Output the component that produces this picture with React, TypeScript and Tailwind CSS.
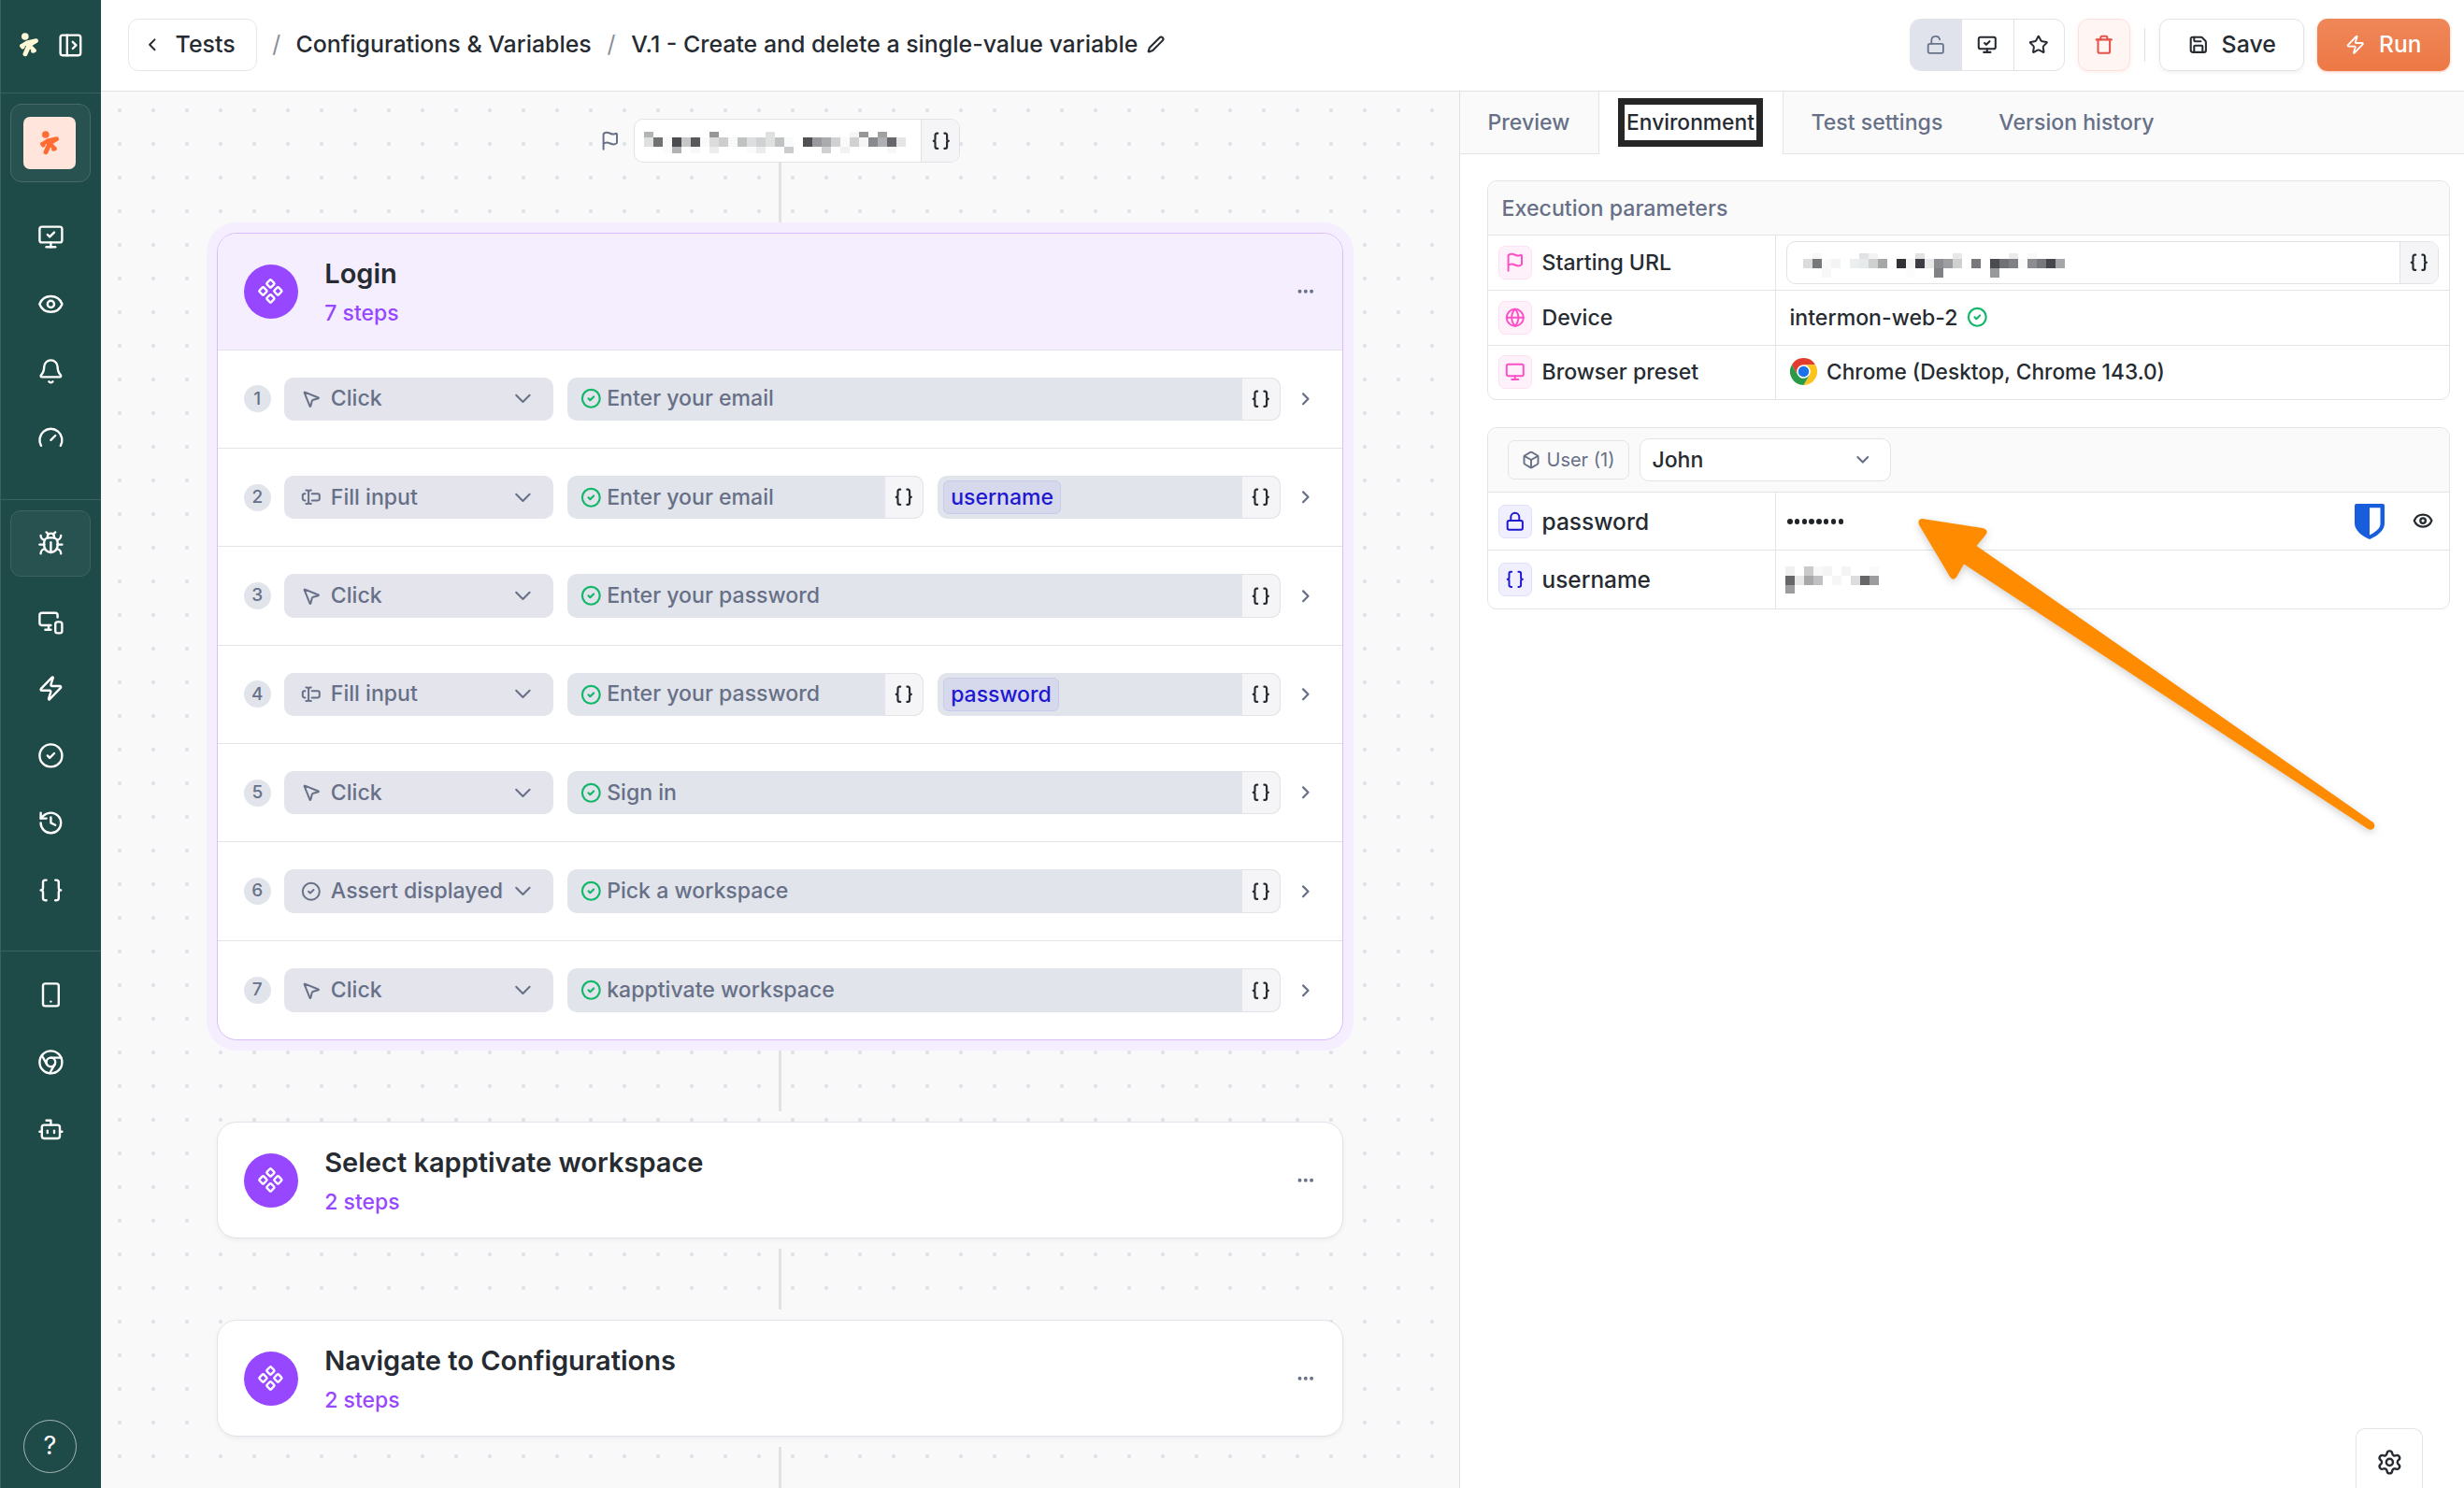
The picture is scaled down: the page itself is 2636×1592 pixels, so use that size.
import type { ReactNode } from "react";
import {
  Bell,
  Bot,
  Box,
  Braces,
  Bug,
  ChevronDown,
  ChevronLeft,
  ChevronRight,
  Chromium,
  CircleCheck,
  Component,
  Ellipsis,
  Eye,
  Flag,
  Gauge,
  Globe,
  History,
  Lock,
  LockOpen,
  Monitor,
  MonitorCheck,
  MonitorSmartphone,
  MousePointer2,
  PanelLeftOpen,
  Pen,
  Save,
  Settings,
  Smartphone,
  Star,
  TextCursorInput,
  Trash,
  Zap,
} from "lucide-react";
import type { LucideIcon } from "lucide-react";

const SM = 21.6;
const LG = 28.8;

/* ---------- Shared pieces ---------- */

function Runner({ className }: { className: string }) {
  return (
    <svg viewBox="0 0 60 78" className={className} fill="none" stroke="currentColor" strokeLinecap="round" strokeLinejoin="round">
      <circle cx="17.5" cy="12" r="11.5" fill="currentColor" stroke="none" />
      <path d="M8 42L24 32L53 25" strokeWidth="13" />
      <path d="M53 27L38 36" strokeWidth="12" />
      <path d="M7 42L10 46" strokeWidth="13" />
      <path d="M30 36L27 48L18 68" strokeWidth="15" />
      <path d="M32 42L47 57" strokeWidth="13" />
      <path d="M47 58L42 59" strokeWidth="12" />
    </svg>
  );
}

function ChromeLogo() {
  return (
    <svg viewBox="0 0 48 48" className="size-[29px] shrink-0">
      <circle cx="24" cy="24" r="12" fill="#fff" />
      <path d="M24,12H44.7812a23.9939,23.9939,0,0,0-41.5639.0029L13.6079,30l.0093-.0024A11.9852,11.9852,0,0,1,24,12Z" fill="#e33b2e" />
      <path d="M34.3913,30.0029,24.0007,48A23.994,23.994,0,0,0,44.78,12.0031H23.9989l-.0025.0093A11.985,11.985,0,0,1,34.3913,30.0029Z" fill="#fcc31e" />
      <path d="M13.6086,30.0031,3.218,12.006A23.994,23.994,0,0,0,24.0025,48L34.3931,30.0029l-.0067-.0068a11.9852,11.9852,0,0,1-20.7778.007Z" fill="#2a9a47" />
      <circle cx="24" cy="24" r="9.5" fill="#1a73e8" />
    </svg>
  );
}

/* Redacted value: a coarse mosaic, one list of grey levels per row ("" leaves a cell empty). */
function Mosaic({ rows }: { rows: { height: number; cells: string[] }[] }) {
  return (
    <div className="flex flex-col">
      {rows.map((row, r) => (
        <div key={r} className="flex" style={{ height: row.height }}>
          {row.cells.map((c, i) => (
            <div key={i} className="w-[10px] shrink-0" style={{ backgroundColor: c ? "#" + c : undefined }} />
          ))}
        </div>
      ))}
    </div>
  );
}

function sparse(length: number, cells: Record<number, string>): string[] {
  return Array.from({ length }, (_, i) => cells[i] ?? "");
}

const startMosaic = [
  { height: 6, cells: sparse(28, { 0: "b3b5b5", 7: "969898", 13: "dfe1e1", 22: "f6f6f6", 23: "969898", 25: "a0a2a2" }) },
  {
    height: 10,
    cells: sparse(28, {
      0: "dfe1e1", 1: "717174", 2: "fafafa", 3: "4c4b50", 4: "c6c8c8", 5: "58585c", 6: "fafafa", 7: "dcdcdd", 8: "cdcdce",
      9: "f8f8f8", 10: "bfc2c2", 11: "dcdedf", 12: "d0d1d2", 13: "dfe1e1", 14: "bfc2c2", 15: "fafafa", 17: "4f4f54",
      18: "98999c", 19: "a9abad", 20: "d0d1d2", 21: "fafafa", 22: "d0d1d2", 23: "f6f6f6", 24: "87898c", 25: "aeb0b2",
      26: "66666b", 27: "e5e5e5",
    }),
  },
  {
    height: 7,
    cells: sparse(28, { 2: "fbfbfb", 3: "b0b2b4", 5: "f8f8f8", 7: "ececec", 11: "fafafa", 12: "ececec", 15: "cbcccd", 19: "d0d1d2", 21: "f2f2f3", 26: "f8f8f8" }),
  },
];

const urlMosaic = [
  { height: 6, cells: sparse(28, { 1: "f7f7f7", 6: "e0e3e3", 7: "f3f3f3", 12: "e2e2e2", 16: "e8e8e8", 22: "ebebeb", 24: "f8f8f8" }) },
  {
    height: 10,
    cells: sparse(28, {
      0: "dcdcdd", 1: "77787b", 2: "fafafa", 3: "f3f5f5", 5: "ebefee", 6: "e6eaea", 7: "cfd0d0", 8: "a4a6a8", 10: "303035",
      11: "f5f5f5", 12: "3c3c42", 13: "e8e8e9", 14: "8c8d90", 15: "9d9ea1", 16: "cfd0d0", 18: "77787b", 20: "4a4b51",
      21: "707174", 22: "808184", 23: "fafafa", 24: "8c8d90", 25: "77787b", 26: "45464b", 27: "a4a6a8",
    }),
  },
  { height: 10, cells: sparse(28, { 2: "f8f8f8", 11: "fcfcfc", 14: "808184", 20: "97999b" }) },
];

const userMosaic = [
  { height: 10, cells: sparse(10, { 0: "f0f0f0", 2: "cacaca", 3: "f8f8f8", 4: "f4f4f4", 6: "f4f4f4", 9: "fafafa" }) },
  { height: 10, cells: sparse(10, { 0: "666668", 1: "e8e8e8", 2: "a8a8aa", 3: "c0c0c2", 5: "f6f6f6", 7: "dcdcdd", 8: "666668", 9: "9c9c9e" }) },
  { height: 9, cells: sparse(10, { 0: "9c9c9e" }) },
];

/* ---------- Sidebar ---------- */

function NavItem({ icon: Icon }: { icon: LucideIcon }) {
  return (
    <div className="flex h-[71.8px] items-center justify-center">
      <Icon size={LG} strokeWidth={2} />
    </div>
  );
}

function Sidebar() {
  return (
    <aside className="flex h-full w-[108px] shrink-0 flex-col border-l border-[#3b605d] bg-[#1e4a47] text-white">
      <div className="flex h-[100px] shrink-0 items-center gap-[20px] border-b border-[#386260] pb-[3px] pl-[19.5px]">
        <Runner className="h-[26px] w-[20px] text-[#fff8d6]" />
        <PanelLeftOpen size={LG} strokeWidth={2} />
      </div>
      <div className="mr-[11px] ml-[10px] mt-[11px] flex h-[84px] shrink-0 items-center justify-center rounded-[12px] border border-[#47696a] bg-[#27524f]">
        <div className="mr-[2px] flex size-[56px] items-center justify-center rounded-[7px] bg-[#ffe5dc]">
          <Runner className="h-[26px] w-[20px] text-[#ff6c33]" />
        </div>
      </div>
      <div className="mt-[22.5px]">
        {[MonitorCheck, Eye, Bell, Gauge].map((icon, i) => (
          <NavItem key={i} icon={icon} />
        ))}
      </div>
      <div className="mt-[29px] h-px shrink-0 bg-[#386260]" />
      <div className="mr-[11px] ml-[10px] mt-[11.5px] flex h-[71px] shrink-0 items-center justify-center rounded-[11px] border border-[#3d6260] bg-[#27524f]">
        <Bug size={LG} strokeWidth={2} />
      </div>
      <div className="mt-[12px]">
        {[MonitorSmartphone, Zap, CircleCheck, History, Braces].map((icon, i) => (
          <NavItem key={i} icon={icon} />
        ))}
      </div>
      <div className="mt-[28.5px] h-px shrink-0 bg-[#386260]" />
      <div className="mt-[11px]">
        {[Smartphone, Chromium, Bot].map((icon, i) => (
          <NavItem key={i} icon={icon} />
        ))}
      </div>
      <div className="mt-auto mb-[16px] ml-[24px] flex size-[57px] shrink-0 items-center justify-center rounded-full border-[1.5px] border-[#a5b7b5] text-[27px]">
        ?
      </div>
    </aside>
  );
}

/* ---------- Header ---------- */

function Header() {
  return (
    <header className="flex h-[98px] shrink-0 items-center border-b border-[#e3e3e5] bg-white pr-[15px] pb-[2px] pl-[29px] text-[24.9px] font-medium text-[#262b31]">
      <div className="flex h-[56px] w-[138px] items-center rounded-[11px] border border-[#e6e6e9] pl-[14px]">
        <ChevronLeft size={SM} strokeWidth={2.2} />
        <span className="ml-[14px]">Tests</span>
      </div>
      <span className="w-[41.5px] text-center font-normal text-[#8b8f96]">/</span>
      <span>Configurations &amp; Variables</span>
      <span className="w-[42.5px] text-center font-normal text-[#8b8f96]">/</span>
      <span className="whitespace-nowrap">V.1 - Create and delete a single-value variable</span>
      <Pen className="ml-[10px]" size={19} strokeWidth={2.6} />

      <div className="ml-auto flex items-center gap-[14.5px]">
        <div className="flex h-[56px] w-[166px] overflow-hidden rounded-[11px] border border-[#e3e3e6]">
          <div className="flex w-[55px] items-center justify-center bg-[#e0e3ec] text-[#697388]">
            <LockOpen size={SM} />
          </div>
          <div className="flex w-[55px] items-center justify-center">
            <MonitorCheck size={SM} strokeWidth={2.3} />
          </div>
          <div className="flex flex-1 items-center justify-center border-l border-[#e3e3e6]">
            <Star size={SM} strokeWidth={2.2} />
          </div>
        </div>
        <div className="flex size-[56px] items-center justify-center rounded-[11px] border border-[#ffdfdb] bg-[#fff5f3] text-[#e5534b] shadow-[0_2px_4px_rgba(229,83,75,0.08)]">
          <Trash size={SM} strokeWidth={2.3} />
        </div>
        <div className="h-[36px] w-[1.5px] bg-[#dfe0e3]" />
        <div className="flex h-[56px] w-[155px] items-center rounded-[11px] border border-[#e3e3e6] pl-[30px] shadow-[0_2px_4px_rgba(0,0,0,0.06)]">
          <Save size={SM} strokeWidth={2.3} />
          <span className="ml-[14.5px]">Save</span>
        </div>
        <div className="flex h-[56px] w-[142px] items-center rounded-[11px] bg-linear-to-b from-[#ef8758] to-[#ed7845] pl-[30px] text-white shadow-[0_1px_3px_rgba(237,120,69,0.4)]">
          <Zap size={SM} />
          <span className="ml-[14.5px] text-[24.5px]">Run</span>
        </div>
      </div>
    </header>
  );
}

/* ---------- Flow canvas ---------- */

type Step = { action: "Click" | "Fill input" | "Assert displayed"; target: string; variable?: string };

const steps: Step[] = [
  { action: "Click", target: "Enter your email" },
  { action: "Fill input", target: "Enter your email", variable: "username" },
  { action: "Click", target: "Enter your password" },
  { action: "Fill input", target: "Enter your password", variable: "password" },
  { action: "Click", target: "Sign in" },
  { action: "Assert displayed", target: "Pick a workspace" },
  { action: "Click", target: "kapptivate workspace" },
];

const actionIcons: Record<Step["action"], LucideIcon> = {
  Click: MousePointer2,
  "Fill input": TextCursorInput,
  "Assert displayed": CircleCheck,
};

function BracesButton() {
  return (
    <div className="flex w-[41px] shrink-0 items-center justify-center rounded-r-[10px] border-y border-r border-[#e2e3e6] bg-[#f5f5f7] text-[#262b31]">
      <Braces size={SM} strokeWidth={2.4} />
    </div>
  );
}

function StepRow({ step, index }: { step: Step; index: number }) {
  const Icon = actionIcons[step.action];
  return (
    <div className="flex h-[105.35px] items-center border-b border-[#e4e4e7] pr-[29px] pl-[28px] text-[23.1px] font-medium text-[#677087] last:border-b-0">
      <div className="flex size-[29px] shrink-0 items-center justify-center rounded-full bg-[#e1e4eb] text-[19px]">{index}</div>
      <div className="ml-[14.5px] flex h-[46.5px] w-[288px] shrink-0 items-center rounded-[10px] bg-[#e3e4ec] pr-[18px] pl-[18px]">
        <Icon size={SM} strokeWidth={2.2} />
        <span className="ml-[10px] whitespace-nowrap">{step.action}</span>
        <ChevronDown className="ml-auto" size={LG} strokeWidth={1.7} />
      </div>
      <div className="ml-[14.8px] flex h-[46.5px] flex-1 rounded-[10px] bg-[#e1e4eb]">
        <div className="flex flex-1 items-center pl-[14px]">
          <CircleCheck className="text-[#12b76a]" size={SM + 1} strokeWidth={2.3} />
          <span className="ml-[5.5px] whitespace-nowrap">{step.target}</span>
        </div>
        <BracesButton />
      </div>
      {step.variable && (
        <div className="ml-[15.4px] flex h-[46.5px] w-[366.5px] rounded-[10px] bg-[#e1e4eb]">
          <div className="flex flex-1 items-center pl-[5.5px]">
            <span className="flex h-[36px] items-center rounded-[6px] border border-[#c8caea] bg-[#d6d8ec] px-[7.5px] text-[23px] text-[#1f17d2]">
              {step.variable}
            </span>
          </div>
          <BracesButton />
        </div>
      )}
      <ChevronRight className="ml-[16px] shrink-0" size={SM} strokeWidth={2.5} />
    </div>
  );
}

function GroupHeader({ title, count }: { title: string; count: string }) {
  return (
    <div className="flex flex-1 items-center pr-[29px] pl-[28px]">
      <div className="flex size-[58px] shrink-0 items-center justify-center rounded-full bg-[#9747ff] text-white">
        <Component size={LG} />
      </div>
      <div className="flex flex-1 flex-col pt-[3px] pl-[28.5px]">
        <span className="text-[29px] leading-[36px] font-semibold text-[#262b31]">{title}</span>
        <span className="mt-[7px] text-[23px] leading-[34px] font-medium text-[#9747ff]">{count}</span>
      </div>
      <Ellipsis className="text-[#677087]" size={SM} strokeWidth={2.4} />
    </div>
  );
}

function Connector() {
  return <div className="my-[11px] h-[65px] w-[3px] shrink-0 bg-[#e2e2e2]" />;
}

function GroupCard({ title, count }: { title: string; count: string }) {
  return (
    <div className="flex h-[125px] w-[1205.5px] shrink-0 rounded-[21px] border border-[#e1e3ea] bg-white shadow-[0_2px_5px_rgba(0,0,0,0.05)]">
      <GroupHeader title={title} count={count} />
    </div>
  );
}

function Canvas() {
  return (
    <div className="flex w-[1453px] shrink-0 flex-col items-center overflow-hidden bg-[#f9f9f9] bg-[radial-gradient(circle,#e0e2eb_1.7px,transparent_2.4px)] bg-[length:36px_36px] bg-[position:2px_2px] pt-[29px]">
      <div className="flex shrink-0 items-center gap-[15px]">
        <Flag className="text-[#677087]" size={SM} strokeWidth={2.2} />
        <div className="flex h-[47px] w-[349px] overflow-hidden rounded-[10px] border border-[#e2e2e5] bg-white">
          <div className="flex flex-1 items-center pt-[3px] pl-[10px]">
            <Mosaic rows={startMosaic} />
          </div>
          <div className="flex w-[41px] items-center justify-center border-l border-[#e2e2e5] bg-[#f5f5f7] text-[#262b31]">
            <Braces size={SM} strokeWidth={2.4} />
          </div>
        </div>
      </div>
      <div className="mb-[10px] h-[65px] w-[3px] shrink-0 bg-[#e2e2e2]" />
      <div className="w-[1205.5px] shrink-0 overflow-hidden rounded-[21px] border border-[#d9bcfb] bg-white shadow-[0_0_0_11px_#f5eeff,0_4px_6px_rgba(100,50,160,0.12)]">
        <div className="flex h-[124.6px] border-b border-[#e2e0e8] bg-[#f5eeff]">
          <GroupHeader title="Login" count="7 steps" />
        </div>
        <div>
          {steps.map((step, i) => (
            <StepRow key={i} step={step} index={i + 1} />
          ))}
        </div>
      </div>
      <Connector />
      <GroupCard title="Select kapptivate workspace" count="2 steps" />
      <Connector />
      <GroupCard title="Navigate to Configurations" count="2 steps" />
      <Connector />
    </div>
  );
}

/* ---------- Right panel ---------- */

function Tile({ icon: Icon, tone }: { icon: LucideIcon; tone: "pink" | "blue" }) {
  const colors = tone === "pink" ? "border-[#fde0f4] bg-[#fff1fa] text-[#ff4fc8]" : "border-[#dfdffa] bg-[#efeffe] text-[#1f17d2]";
  return (
    <div className={`flex size-[36px] shrink-0 items-center justify-center rounded-[7px] border ${colors}`}>
      <Icon size={SM} strokeWidth={2.2} />
    </div>
  );
}

function ParamRow({
  icon,
  tone,
  label,
  height,
  children,
}: {
  icon: LucideIcon;
  tone: "pink" | "blue";
  label: ReactNode;
  height: string;
  children: ReactNode;
}) {
  return (
    <div className={`flex border-t border-[#e3e4e6] ${height}`}>
      <div className="flex w-[308px] shrink-0 items-center border-r border-[#e3e4e6] pl-[10.5px]">
        <Tile icon={icon} tone={tone} />
        <div className="ml-[11px] pt-px">{label}</div>
      </div>
      <div className="flex flex-1 items-center">{children}</div>
    </div>
  );
}

function Tabs() {
  return (
    <div className="flex h-[67px] shrink-0 text-[23.1px] font-medium text-[#677087]">
      <div className="flex w-[149px] items-center border-r border-b border-[#e3e4e6] bg-[#fafafa] pl-[29.5px]">Preview</div>
      <div className="flex w-[196px] items-center bg-white pb-[1px] pl-[20px]">
        <div className="flex h-[52px] w-[155px] items-center justify-center border-[7px] border-[#262626] text-[22.8px] text-[#262b31]">
          Environment
        </div>
      </div>
      <div className="flex flex-1 items-center gap-[60px] border-b border-l border-[#e3e4e6] bg-[#fafafa] pl-[29.5px]">
        <span>Test settings</span>
        <span>Version history</span>
      </div>
    </div>
  );
}

function SidePanel() {
  return (
    <div className="relative flex flex-1 flex-col border-l border-[#e0e1e4] bg-white">
      <Tabs />
      <div className="flex flex-1 flex-col pt-[28px] pr-[15px] pl-[29px] text-[23.1px] font-medium text-[#262b31]">
        <section className="overflow-hidden rounded-[10px] border border-[#e3e4e6]">
          <div className="flex h-[57px] items-center bg-[#fafafa] pt-[2px] pl-[14.5px] text-[23.2px] text-[#677087]">Execution parameters</div>
          <ParamRow icon={Flag} tone="pink" label="Starting URL" height="h-[59px]">
            <div className="ml-[11px] flex h-[46px] w-[698px] overflow-hidden rounded-[10px] border border-[#e2e2e5]">
              <div className="flex flex-1 items-center pt-[6px] pl-[17px]">
                <Mosaic rows={urlMosaic} />
              </div>
              <div className="flex w-[41px] items-center justify-center border-l border-[#e2e2e5] bg-[#f5f5f7]">
                <Braces size={SM} strokeWidth={2.4} />
              </div>
            </div>
          </ParamRow>
          <ParamRow icon={Globe} tone="pink" label="Device" height="h-[58.5px]">
            <span className="ml-[14.5px] pt-px">intermon-web-2</span>
            <CircleCheck className="ml-[9.5px] text-[#12b76a]" size={SM + 1} strokeWidth={2.3} />
          </ParamRow>
          <ParamRow icon={Monitor} tone="pink" label="Browser preset" height="h-[58px]">
            <div className="ml-[15px] flex items-center">
              <ChromeLogo />
              <span className="ml-[10px] pt-px text-[22.7px]">Chrome (Desktop, Chrome 143.0)</span>
            </div>
          </ParamRow>
        </section>

        <section className="mt-[29px] overflow-hidden rounded-[10px] border border-[#e3e4e6]">
          <div className="flex h-[68.5px] items-center bg-[#fafafa] pl-[20.5px]">
            <div className="flex h-[42px] w-[130px] items-center rounded-[7px] border border-[#e3e4e6] pl-[14.5px] font-normal text-[#677087]">
              <Box size={20} strokeWidth={2.3} />
              <span className="ml-[6.5px] text-[20px]">User (1)</span>
            </div>
            <div className="ml-[11px] flex h-[46px] w-[269px] items-center rounded-[10px] border border-[#e3e4e6] bg-white pr-[17.5px] pl-[13px]">
              <span className="text-[23px]">John</span>
              <ChevronDown className="ml-auto text-[#677087]" size={SM} strokeWidth={2.4} />
            </div>
          </div>
          <ParamRow icon={Lock} tone="blue" label={<span className="text-[24.5px]">password</span>} height="h-[62px]">
            <div className="ml-[12px] flex items-center gap-[2.3px] pt-px">
              {Array.from({ length: 8 }, (_, i) => (
                <span key={i} className="size-[5.5px] rounded-full bg-[#202327]" />
              ))}
            </div>
            <svg viewBox="0 0 32 38" className="ml-auto h-[38px] w-[32px]">
              <path d="M0 2Q0 0 2 0H30Q32 0 32 2V21C32 29 23 35 16 38C9 35 0 29 0 21Z" fill="#175ddc" />
              <path d="M16 4.3H27.5V21.5C27.5 26.5 21.5 30.700 16 33.400Z" fill="#fff" />
            </svg>
            <Eye className="mr-[16.500px] ml-[30px]" size={SM + 0.6} strokeWidth={2.5} />
          </ParamRow>
          <ParamRow icon={Braces} tone="blue" label={<span className="text-[24.4px]">username</span>} height="h-[62.5px]">
            <div className="ml-[10px] pt-px">
              <Mosaic rows={userMosaic} />
            </div>
          </ParamRow>
        </section>

        <div className="mt-auto mr-[29px] flex h-[64px] w-[72px] items-center justify-center self-end rounded-t-[10px] border-x border-t border-[#e3e4e6] pt-[8px]">
          <Settings size={LG} />
        </div>
      </div>

      {/* Callout arrow pointing at the password row */}
      <svg viewBox="2040 540 520 360" className="absolute top-[442px] left-[478px] h-[360px] w-[520px] overflow-visible drop-shadow-[0_3px_4px_rgba(0,0,0,0.18)]">
        <path
          d="M2056.500 555L2121 565Q2128 567 2124.500 572L2114.500 584L2539 880Q2541.500 883 2539.500 886Q2537 889 2533.500 887L2101 603.500L2093 617.500Q2089.500 622 2086 617L2053 561.500Q2051 555.500 2056.500 555Z"
          fill="#ff8c00"
        />
      </svg>
    </div>
  );
}

export default function App() {
  return (
    <div className="flex h-[1592px] w-[2636px] overflow-hidden bg-white font-[Inter,sans-serif]">
      <Sidebar />
      <main className="flex min-w-0 flex-1 flex-col">
        <Header />
        <div className="flex min-h-0 flex-1">
          <Canvas />
          <SidePanel />
        </div>
      </main>
    </div>
  );
}
